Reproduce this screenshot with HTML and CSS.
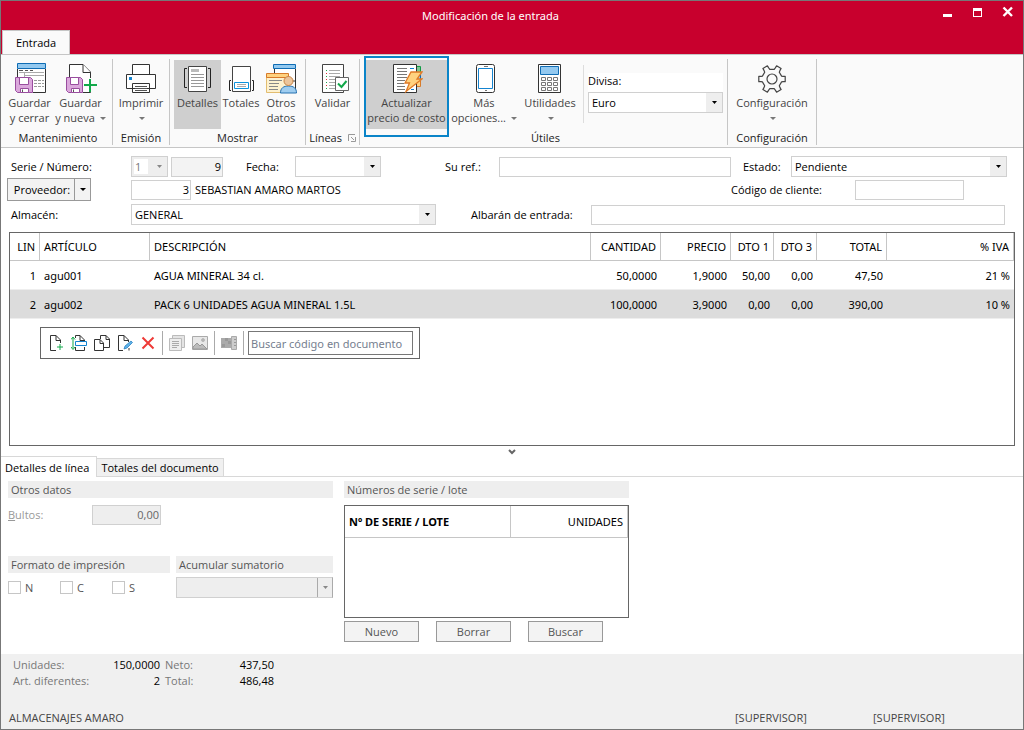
FILE: index.html
```html
<!DOCTYPE html>
<html lang="es">
<head>
<meta charset="utf-8">
<title>Modificación de la entrada</title>
<link rel="stylesheet" href="styles.css">
</head>
<body>
<div class="window">
  <header class="titlebar">
    <div class="title-row">
      <h1 class="title">Modificación de la entrada</h1>
      <div class="controls">
        <button class="control" aria-label="Minimizar"><svg width="12" height="12" viewBox="0 0 12 12"><path d="M1 8h9v3H1z" fill="#fff"/></svg></button>
        <button class="control" aria-label="Maximizar"><svg width="12" height="12" viewBox="0 0 12 12"><path d="M1 2h9v9H1z M2 5v5h7V5z" fill="#fff" fill-rule="evenodd"/></svg></button>
        <button class="control" aria-label="Cerrar"><svg width="12" height="12" viewBox="0 0 12 12"><path d="M1.500 1.500l8.500 8.500M10 1.500l-8.500 8.500" stroke="#fff" stroke-width="2.400"/></svg></button>
      </div>
    </div>
    <button class="ribbon-tab">Entrada</button>
  </header>

  <div class="ribbon">
    <section class="group g-mant">
      <div class="tools">
        <button class="tool w-51">
          <svg class="icon" viewBox="0 0 32 32"><path d="M3.500 7v9M31.500 7v23.500H19" fill="none" stroke="#333"/><path d="M4 8h27v22H4z" fill="#fff"/><path d="M3.500 1.500h28v5h-28z" fill="#93c9f0" stroke="#0f6cb4"/><path d="M5 8.500h4M11 8.500h3M16 8.500h3" stroke="#555"/><path d="M5 10.500h25M11 13.500h19M10.500 11v4" stroke="#aaa"/><path d="M20 18.500h10M20 21.500h10M20 24.500h10" stroke="#999" stroke-dasharray="3 1"/><path d="M1.500 15.500h15l2 2v13h-15l-2-2z" fill="#dba8dc" stroke="#994d9e"/><path d="M5.500 15.500h9v7h-9zM6.500 26.500h8v4h-8z" fill="#fff" stroke="#994d9e"/><path d="M8.500 27.500v2.500" stroke="#555"/></svg>
          <span>Guardar<br>y cerrar</span>
        </button>
        <button class="tool w-51">
          <svg class="icon" viewBox="0 0 32 32"><path d="M4.500 17V2.500H18l7.500 7.500v20.500H18" fill="#fff" stroke="#333"/><path d="M18 2.500v8h7.500" fill="#fff" stroke="#333"/><path d="M1.500 15.500h14l2 2v13h-14l-2-2z" fill="#dba8dc" stroke="#994d9e"/><path d="M5.500 15.500h8v7h-8zM6.500 26.500h8v4h-8z" fill="#fff" stroke="#994d9e"/><path d="M8.500 27.500v2.500" stroke="#555"/><path d="M24 16h3v6h6v3h-15v-3h6z" fill="#fafafa"/><path d="M25 17v13M19 23h13" stroke="#12a84a" stroke-width="2"/></svg>
          <span>Guardar<br>y nueva <i class="caret"></i></span>
        </button>
      </div>
      <h2 class="group-name">Mantenimiento</h2>
    </section>
    <section class="group g-emision">
      <div class="tools">
        <button class="tool w-51">
          <svg class="icon" viewBox="0 0 32 32"><path d="M7.500 2.500h17v10h-17zM1.500 12.500h29v14h-29zM7.500 21.500h17v9h-17z" fill="#fff" stroke="#333"/><path d="M10 24.500h12M10 26.500h12M10 28.500h12" stroke="#555"/><path d="M4 15h3v3H4z" fill="#1584d0"/></svg>
          <span>Imprimir<br><i class="caret"></i></span>
        </button>
      </div>
      <h2 class="group-name">Emisión</h2>
    </section>
    <section class="group g-mostrar">
      <div class="tools">
        <button class="tool w-47 on">
          <svg class="icon" viewBox="0 0 32 32"><path d="M6.500 4.500h18v25h-18z" fill="#fff" stroke="#444"/><path d="M5 6.500H2.500v19H5M26 6.500h2.500v19H26" fill="none" stroke="#222"/><path d="M9 7h8v3H9z" fill="#bbb"/><path d="M9 12.500h13M9 15.500h13M9 18.500h13M9 21.500h13M9 24.500h13" stroke="#999"/></svg>
          <span>Detalles</span>
        </button>
        <button class="tool w-40">
          <svg class="icon" viewBox="0 0 32 32"><path d="M7.500 4.500h18v25h-18z" fill="#fff" stroke="#444"/><path d="M6 18.500H4.500v10H6M27 18.500h1.500v10H27" fill="none" stroke="#222"/><path d="M9.500 20.500h14v6h-14z" fill="#fff" stroke="#0d93dd"/><path d="M12 22.500h9M12 24.500h9" stroke="#aaa"/></svg>
          <span>Totales</span>
        </button>
        <button class="tool w-40">
          <svg class="icon" viewBox="0 0 32 32"><path d="M9.500 7v12h21V7" fill="#fff" stroke="#333"/><path d="M30.500 7v23" stroke="#333"/><path d="M8.500 2.500h22v4h-22z" fill="#93c9f0" stroke="#0f6cb4"/><path d="M1.500 14.500h22v16h-22z" fill="#fdf1cf" stroke="#e2bd70"/><path d="M1.500 11.500h22v4h-22z" fill="#ffd27f" stroke="#d77b2b"/><path d="M4 18.500h13M4 21.500h10M4 24.500h9M4 27.500h9" stroke="#888"/><path d="M15.500 31c0-5 3-7 8-7s8 2 8 7z" fill="#9fcdf0" stroke="#2471b0"/><circle cx="23.500" cy="19" r="4.500" fill="#ecc59c" stroke="#c98446"/></svg>
          <span>Otros<br>datos</span>
        </button>
      </div>
      <h2 class="group-name">Mostrar</h2>
    </section>
    <section class="group g-lineas">
      <div class="tools">
        <button class="tool w-51">
          <svg class="icon" viewBox="0 0 32 32"><path d="M5.500 2.500h21v28h-21z" fill="#fff" stroke="#444"/><path d="M9.500 8v20" stroke="#1ba94c" stroke-dasharray="1 5"/><path d="M9.500 11v17" stroke="#d33" stroke-dasharray="1 5"/><path d="M12 8.500h11M12 11.500h11M12 14.500h11M12 17.500h6M12 20.500h6M12 23.500h6M12 26.500h6" stroke="#aaa"/><path d="M18.500 15.500h13v13h-13z" fill="#fff" stroke="#666"/><path d="M21 21.500l3.500 3.500 5-6" fill="none" stroke="#12a84a" stroke-width="2"/></svg>
          <span>Validar</span>
        </button>
      </div>
      <h2 class="group-name">Líneas <svg class="launcher" width="8" height="8" viewBox="0 0 8 8"><path d="M.5 7V.5H7M7.500 3v4.500H3M3 3l3 3" fill="none" stroke="#999"/></svg></h2>
    </section>
    <section class="group g-utiles">
      <div class="tools">
        <button class="tool w-85 on framed">
          <svg class="icon" viewBox="0 0 32 32"><path d="M25.500 4.500h4v6h-4z" fill="#7bc894" stroke="#119a45"/><path d="M25.500 11.500h4v6h-4z" fill="#93c9f0" stroke="#0f6cb4"/><path d="M25.500 18.500h4v6h-4z" fill="#ffd27f" stroke="#d77b2b"/><path d="M2.500 2.500h23v28h-23z" fill="#fff" stroke="#333"/><path d="M6 6.500h10M6 9.500h10M6 12.500h10M6 15.500h10M6 18.500h8M6 21.500h7M6 24.500h8M6 27.500h8" stroke="#777"/><path d="M19 6.500h4M20 27.500h3" stroke="#0d7fd0"/><path d="M20 10h11l-5 7h5L15 29.500l3.500-8.500H14z" fill="#ffd27f" stroke="#e07a26" stroke-width="1.300"/></svg>
          <span>Actualizar<br>precio de costo</span>
        </button>
        <button class="tool w-70">
          <svg class="icon" viewBox="0 0 32 32"><rect x="8.500" y="2.500" width="18" height="28" rx="2" fill="#fff" stroke="#333"/><path d="M10.500 6.500h14v20h-14z" fill="#fff" stroke="#1584d0"/><path d="M16 4.500h4M17 28.500h2" stroke="#777"/></svg>
          <span>Más<br>opciones... <i class="caret"></i></span>
        </button>
        <button class="tool w-62">
          <svg class="icon" viewBox="0 0 32 32"><path d="M4.500 2.500h22v28h-22z" fill="#fff" stroke="#333"/><path d="M6.500 4.500h18v8h-18z" fill="#93c9f0" stroke="#0f6cb4"/><path d="M7.500 15.500h4v3h-4zM13.500 15.500h4v3h-4zM19.500 15.500h4v3h-4zM7.500 20.500h4v3h-4zM13.500 20.500h4v3h-4zM19.500 20.500h4v3h-4zM7.500 25.500h4v3h-4zM13.500 25.500h4v3h-4zM19.500 25.500h4v3h-4z" fill="#fff" stroke="#777"/></svg>
          <span>Utilidades<br><i class="caret"></i></span>
        </button>
        <div class="currency">
          <label for="divisa">Divisa:</label>
          <select id="divisa"><option>Euro</option></select>
        </div>
      </div>
      <h2 class="group-name">Útiles</h2>
    </section>
    <section class="group g-config">
      <div class="tools">
        <button class="tool w-80">
          <svg class="icon" viewBox="0 0 32 32"><path d="M25.600 14.100L27 14.300h2.200v5.400H27l-1.400.200-2.300 3.900.600 1.600 1.200 2.200-4.500 2.600-1.300-2-1.100-1.500h-4.400l-1.100 1.500-1.300 2-4.500-2.600 1.200-2.200.600-1.600-2.300-3.900-1.400-.2H2.800v-5.400H5l1.400-.2 2.300-3.900-.6-1.600-1.200-2.200 4.500-2.600 1.300 2 1.100 1.500h4.400l1.100-1.500 1.300-2 4.500 2.600-1.200 2.200-.6 1.600z" fill="none" stroke="#444" stroke-width="1.200" stroke-linejoin="round"/><circle cx="16" cy="17" r="5" fill="none" stroke="#444" stroke-width="1.200"/></svg>
          <span>Configuración<br><i class="caret"></i></span>
        </button>
      </div>
      <h2 class="group-name">Configuración</h2>
    </section>
  </div>

  <form class="form">
    <div class="row">
      <label class="l-120" for="serie">Serie / Número:</label>
      <select id="serie" class="f-37" disabled><option>1</option></select>
      <input class="f-52 num readonly" aria-label="Número" value="9" readonly>
      <label class="l-fecha" for="fecha">Fecha:</label>
      <select id="fecha" class="f-86"><option></option></select>
      <label class="l-ref" for="ref">Su ref.:</label>
      <input id="ref" class="grow">
      <label class="l-estado" for="estado">Estado:</label>
      <select id="estado" class="f-216"><option>Pendiente</option></select>
    </div>
    <div class="row row-prov">
      <div class="l-124"><span class="split"><button type="button" class="split-main">Proveedor:</button><button type="button" class="split-arrow" aria-label="Más proveedores"><i class="caret dark"></i></button></span></div>
      <input class="f-60 num" aria-label="Proveedor" value="3">
      <span class="provider">SEBASTIAN AMARO MARTOS</span>
      <label class="l-124" for="codcli">Código de cliente:</label>
      <input id="codcli" class="f-109">
    </div>
    <div class="row row-alm">
      <label class="l-120" for="almacen">Almacén:</label>
      <select id="almacen" class="f-305"><option>GENERAL</option></select>
      <label class="l-albaran" for="albaran">Albarán de entrada:</label>
      <input id="albaran" class="grow">
    </div>
  </form>

  <main class="lines">
    <table class="grid">
      <colgroup><col class="c-30"><col class="c-110"><col><col class="c-70"><col class="c-70"><col class="c-43"><col class="c-43"><col class="c-70"><col class="c-127"></colgroup>
      <thead><tr><th class="r">LIN</th><th>ARTÍCULO</th><th>DESCRIPCIÓN</th><th class="r">CANTIDAD</th><th class="r">PRECIO</th><th class="r">DTO 1</th><th class="r">DTO 3</th><th class="r">TOTAL</th><th class="r">% IVA</th></tr></thead>
      <tbody>
        <tr><td class="r">1</td><td>agu001</td><td>AGUA MINERAL 34 cl.</td><td class="r">50,0000</td><td class="r">1,9000</td><td class="r">50,00</td><td class="r">0,00</td><td class="r">47,50</td><td class="r">21 %</td></tr>
        <tr class="selected"><td class="r">2</td><td>agu002</td><td>PACK 6 UNIDADES AGUA MINERAL 1.5L</td><td class="r">100,0000</td><td class="r">3,9000</td><td class="r">0,00</td><td class="r">0,00</td><td class="r">390,00</td><td class="r">10 %</td></tr>
      </tbody>
    </table>
    <div class="toolbar">
      <button aria-label="Nueva línea"><svg width="16" height="16" viewBox="0 0 16 16"><path d="M8 15.500H2.500V.5H8l4.500 4.500v3M8 .5v5h4.500" fill="none" stroke="#333"/><path d="M12 9v6M9 12h6" stroke="#12a84a"/></svg></button>
      <button aria-label="Insertar línea"><svg width="16" height="16" viewBox="0 0 16 16"><path d="M4.500 3V.5H9L13.500 5v2M9 .5v5h4.500M4.500 12v3.500h9V12" fill="none" stroke="#333"/><path d="M4.500 6.500h11v4h-11z" fill="#fff" stroke="#1584d0"/><path d="M2 3v10M0 4.500L2 2l2 2.500M0 12l2 2.500L4 12" fill="none" stroke="#12a84a"/></svg></button>
      <button aria-label="Duplicar línea"><svg width="16" height="16" viewBox="0 0 16 16"><path d="M6.500 4V.5H12l3.500 3.500v8.500h-6M12 .5v4h3.500" fill="none" stroke="#333"/><path d="M.5 4.500H6L9.500 8v7.500h-9zM6 4.500v4h3.500" fill="#fff" stroke="#333"/></svg></button>
      <button aria-label="Modificar línea"><svg width="16" height="16" viewBox="0 0 16 16"><path d="M6 15.500H1.500V.5H7L11.500 5v2M12 13v2.500M7 .5v5h4.500" fill="none" stroke="#333"/><path d="M7 14l1-3 6-5 1.500 1.500L10 13z" fill="#5fb2e8" stroke="#1b79bd" stroke-width=".7"/></svg></button>
      <button aria-label="Borrar línea"><svg width="16" height="16" viewBox="0 0 16 16"><path d="M2.500 2.500l11 11M13.500 2.500l-11 11" stroke="#ee3a37" stroke-width="2"/></svg></button>
      <span class="rule"></span>
      <button aria-label="Notas" disabled><svg width="16" height="16" viewBox="0 0 16 16"><path d="M3.500 .5h12v12h-12z" fill="#e4e4e4" stroke="#bbb"/><path d="M.5 3.500h12v12H.5z" fill="#eee" stroke="#bbb"/><path d="M3 6.500h7M3 8.500h7M3 10.500h7M3 12.500h5" stroke="#aaa"/></svg></button>
      <button aria-label="Imagen" disabled><svg width="16" height="16" viewBox="0 0 16 16"><path d="M.5 1.500h15v13H.5z" fill="#e8e8e8" stroke="#aaa"/><path d="M1 12l4-4 3 3 2-2 5 5H1z" fill="#bbb" stroke="#999"/><circle cx="11" cy="5" r="1.500" fill="#bbb" stroke="#999" stroke-width=".5"/></svg></button>
      <span class="rule"></span>
      <button aria-label="Tallas y colores" disabled><svg width="16" height="16" viewBox="0 0 16 16"><path d="M0 3h10v10H0z" fill="#aaa"/><path d="M4 3h3v3H4zM7 6h3v3H7zM1 9h3v3H1z" fill="#999"/><path d="M10.500 1.500h5v13h-5z" fill="#ccc" stroke="#aaa"/><path d="M13 4.500h2M13 7.500h2M13 10.500h2" stroke="#999"/></svg></button>
      <span class="rule"></span>
      <input class="search" aria-label="Buscar código en documento" placeholder="Buscar código en documento">
    </div>
  </main>
  <button class="collapse" aria-label="Contraer"><svg width="8" height="6" viewBox="0 0 8 6"><path d="M1 1l3 3 3-3" fill="none" stroke="#666" stroke-width="2"/></svg></button>

  <nav class="tabs"><button class="tab active">Detalles de línea</button><button class="tab">Totales del documento</button></nav>

  <section class="panel">
    <div class="left">
      <h3 class="bar">Otros datos</h3>
      <div class="bultos"><label for="bultos"><u>B</u>ultos:</label><input id="bultos" class="num" value="0,00" disabled></div>
      <div class="pair">
        <div class="format">
          <h3 class="bar">Formato de impresión</h3>
          <div class="checks">
            <label><input type="checkbox" disabled>N</label>
            <label><input type="checkbox" disabled>C</label>
            <label><input type="checkbox" disabled>S</label>
          </div>
        </div>
        <div class="sum">
          <h3 class="bar">Acumular sumatorio</h3>
          <select aria-label="Acumular sumatorio" disabled><option></option></select>
        </div>
      </div>
    </div>
    <div class="right">
      <h3 class="bar">Números de serie / lote</h3>
      <div class="serial">
        <table class="grid">
          <colgroup><col class="c-166"><col></colgroup>
          <thead><tr><th class="strong">Nº DE SERIE / LOTE</th><th class="r">UNIDADES</th></tr></thead>
        </table>
      </div>
      <div class="actions"><button>Nuevo</button><button>Borrar</button><button>Buscar</button></div>
    </div>
  </section>

  <footer class="footer">
    <dl class="totals">
      <dt>Unidades:</dt><dd>150,0000</dd><dt>Neto:</dt><dd>437,50</dd>
      <dt>Art. diferentes:</dt><dd>2</dd><dt>Total:</dt><dd>486,48</dd>
    </dl>
    <div class="status"><span class="company">ALMACENAJES AMARO</span><span class="user">[SUPERVISOR]</span><span class="user">[SUPERVISOR]</span></div>
  </footer>
</div>
</body>
</html>
```

FILE: styles.css
```css
* { box-sizing: border-box; }

body {
  margin: 0;
  font: 11px/15px "Open Sans", "Noto Sans", sans-serif;
  color: #000;
  background: #fff;
}

h1, h2, h3, dl, dd { margin: 0; font: inherit; }
button, input, select { font: inherit; color: inherit; border-radius: 0; margin: 0; }
button { border: 0; padding: 0; background: none; }
svg { display: block; flex: none; }

.window {
  display: flex;
  flex-direction: column;
  min-height: 100vh;
  border: 1px solid #777;
}

.title, .grid, .search { font-family: "Noto Sans", "Open Sans", sans-serif; }

/* Title bar */
.titlebar {
  display: flex;
  flex-direction: column;
  justify-content: space-between;
  height: 53px;
  background: #c8002d;
  color: #fff;
}
.title-row { display: flex; align-items: flex-start; }
.title { flex: 1; padding: 7px 0 0 38px; text-align: center; }
.controls { display: flex; gap: 18px; padding: 5px 9px 0 0; }
.ribbon-tab {
  align-self: flex-start;
  width: 68px;
  height: 24px;
  margin-left: 1px;
  background: #fafafa;
  color: #000;
  border: 1px solid #c6c6c6;
  border-bottom: 0;
}

/* Ribbon */
.ribbon {
  display: flex;
  padding: 4px 0 2px;
  background: #fafafa;
  border-top: 1px solid #c6c6c6;
  border-bottom: 1px solid #c6c6c6;
}
.group {
  display: flex;
  flex-direction: column;
  justify-content: space-between;
  height: 86px;
  padding-top: 1px;
  border-right: 1px solid #c6c6c6;
}
.g-mant { width: 112px; padding-left: 3px; }
.g-emision { width: 57px; }
.g-mostrar { width: 136px; }
.g-mostrar .tools { padding-left: 4px; }
.g-lineas { width: 54px; }
.g-utiles { width: 368px; padding-left: 4px; }
.g-config { width: 89px; }
.tools { display: flex; }
.g-emision .tools, .g-lineas .tools, .g-config .tools { justify-content: center; }
.tool {
  position: relative;
  display: flex;
  flex-direction: column;
  align-items: center;
  gap: 1px;
  height: 69px;
  padding-top: 2px;
  color: #444;
  white-space: nowrap;
}
.tool.on { background: #cfcfcf; }
.framed::after {
  content: "";
  position: absolute;
  inset: -4px 0 -8px;
  border: 2px solid #0a84c8;
}
.w-40 { width: 40px; }
.w-47 { width: 47px; }
.w-51 { width: 51px; }
.w-62 { width: 62px; }
.w-70 { width: 70px; }
.w-80 { width: 80px; }
.w-85 { width: 85px; }
.icon { width: 32px; height: 32px; }
.group-name { text-align: center; color: #222; }
.launcher { display: inline-block; margin-left: 3px; }

.caret {
  display: inline-block;
  margin-left: 2px;
  vertical-align: 2px;
  border: 3px solid transparent;
  border-top-color: #777;
  border-bottom: 0;
}
.caret.dark { margin: 0; border-top-color: #000; }

.currency {
  display: flex;
  flex-direction: column;
  flex: 1;
  height: 58px;
  margin: 5px 4px 0 2px;
  padding: 8px 0 0 4px;
  border-left: 1px solid #ddd;
}
.currency label { height: 19px; background: #fff; }
.currency select { width: 100%; }

/* Fields */
input, select {
  height: 20px;
  padding: 0 4px;
  border: 1px solid #d0d0d0;
  background: #fff;
  min-width: 0;
}
select {
  appearance: none;
  height: 21px;
  padding-left: 3px;
  padding-right: 18px;
  background:
    url("data:image/svg+xml,%3Csvg xmlns='http://www.w3.org/2000/svg' width='5' height='3'%3E%3Cpath d='M0 0h5L2.500 3z'/%3E%3C/svg%3E") right 5px center no-repeat,
    linear-gradient(#eee, #eee) right / 16px 100% no-repeat,
    #fff;
}
select:disabled {
  opacity: 1;
  color: #777;
  background:
    url("data:image/svg+xml,%3Csvg xmlns='http://www.w3.org/2000/svg' width='5' height='3'%3E%3Cpath fill='%23888' d='M0 0h5L2.500 3z'/%3E%3C/svg%3E") right 5px center no-repeat,
    linear-gradient(#fff, #fff) 2px 2px / 14px 15px no-repeat,
    #eee;
}
.num { text-align: right; padding-right: 1px; }
.readonly { background: #f3f3f3; }
.grow { flex: 1; }

/* Document header */
.form {
  display: flex;
  flex-direction: column;
  padding: 8px 16px 5px 10px;
}
.row { display: flex; align-items: center; height: 21px; }
.row-prov { height: 25px; padding-right: 43px; margin-left: -4px; }
.row-alm { height: 25px; }
.l-120 { width: 120px; }
.l-124 { width: 124px; }
.l-fecha { width: 72px; padding-left: 23px; }
.l-ref { width: 118px; padding-left: 64px; }
.l-estado { width: 60px; padding-left: 12px; }
.l-albaran { width: 155px; padding-left: 35px; }
.f-37 { width: 37px; margin-right: 3px; }
.f-52 { width: 52px; }
.f-60 { width: 60px; }
.f-86 { width: 86px; }
.f-109 { width: 109px; }
.f-216 { width: 216px; }
.f-305 { width: 305px; }
#albaran { margin-right: 2px; }
.provider { flex: 1; padding-left: 4px; }
.split { display: flex; width: fit-content; height: 23px; border: 1px solid #999; background: #f3f3f3; }
.split-main { width: 66px; padding-left: 2px; }
.split-arrow { display: flex; align-items: center; justify-content: center; width: 16px; border-left: 1px solid #999; }

/* Lines */
.lines {
  flex: 1;
  margin: 0 8px;
  border: 1px solid #666;
}
.grid { width: 100%; table-layout: fixed; border-collapse: separate; border-spacing: 0; }
.grid th, .grid td { padding: 0 4px; text-align: left; font-weight: 400; white-space: nowrap; }
.grid th {
  height: 28px;
  border-right: 1px solid #c6c6c6;
  border-bottom: 1px solid #c6c6c6;
}
.grid td { height: 29px; border-bottom: 1px solid #eee; }
.grid .r { text-align: right; }
.grid .strong { font-weight: 700; }
.selected { background: #dcdcdc; }
.c-30 { width: 30px; }
.c-43 { width: 43px; }
.c-70 { width: 70px; }
.c-110 { width: 110px; }
.c-127 { width: 127px; }
.c-166 { width: 166px; }

.toolbar {
  display: flex;
  align-items: center;
  gap: 7px;
  width: fit-content;
  height: 32px;
  margin: 8px 0 0 30px;
  padding: 0 6px 0 7px;
  border: 1px solid #666;
}
.rule { width: 1px; height: 24px; margin: 0 -1px; background: #aaa; }
.search { width: 165px; height: 24px; margin-left: -2px; padding: 0 2px; border-color: #777; }
.search::placeholder { color: #76808f; opacity: 1; }
.collapse { align-self: center; height: 10px; padding-top: 1px; }

/* Lower tabs */
.tabs { display: flex; align-items: flex-end; border-bottom: 1px solid #d8d8d8; }
.tab {
  height: 18px;
  padding: 0 4px;
  background: #f0f0f0;
  border: 1px solid #d8d8d8;
  border-left: 0;
  border-bottom: 0;
}
.tab.active { height: 21px; margin-bottom: -1px; padding-right: 7px; background: #fff; }

.panel { display: flex; gap: 11px; height: 177px; padding: 4px 7px 0; color: #555; }
.bar { height: 17px; padding: 1px 3px; background: #eee; }
.left { width: 325px; }
.bultos { display: flex; align-items: center; height: 19px; margin: 7px 0 32px; color: #999; }
.bultos label { width: 84px; }
.bultos input { width: 69px; background: #eee; color: #666; }
.pair { display: flex; gap: 6px; }
.format { width: 162px; }
.sum { flex: 1; }
.sum select {
  width: 100%;
  margin-top: 4px;
  background:
    url("data:image/svg+xml,%3Csvg xmlns='http://www.w3.org/2000/svg' width='16' height='21'%3E%3Cpath d='M.5 .5h15v20H.5z' fill='%23eee' stroke='%23aaa'/%3E%3Cpath fill='%23888' d='M6 9h5l-2.500 3z'/%3E%3C/svg%3E") right / 16px 21px no-repeat border-box,
    #eee;
  border-color: #d0d0d0;
  border-right-color: #aaa;
}
.checks { display: flex; padding-top: 8px; }
.checks label { display: flex; align-items: center; gap: 4px; width: 52px; height: 13px; }
.checks input { appearance: none; width: 13px; height: 13px; padding: 0; border-color: #c6c6c6; }
.right { width: 285px; }
.serial { height: 113px; margin-top: 7px; border: 1px solid #666; color: #000; }
.serial th { height: 32px; }
.actions { display: flex; gap: 17px; margin-top: 3px; }
.actions button { width: 75px; height: 21px; border: 1px solid #999; background: #f3f3f3; }

/* Footer */
.footer {
  display: flex;
  flex-direction: column;
  justify-content: space-between;
  height: 75px;
  padding: 3px 8px 4px;
  background: #f0f0f0;
}
.totals {
  display: grid;
  grid-template-columns: 88px 59px 40px 74px;
  grid-auto-rows: 16px;
  padding-left: 4px;
  color: #777;
}
.totals dd { text-align: right; color: #000; }
.totals dt:nth-of-type(even) { padding-left: 5px; }
.status { display: flex; color: #444; }
.company { flex: 1; }
.user { width: 138px; }
.user:last-child { width: 142px; }
```
